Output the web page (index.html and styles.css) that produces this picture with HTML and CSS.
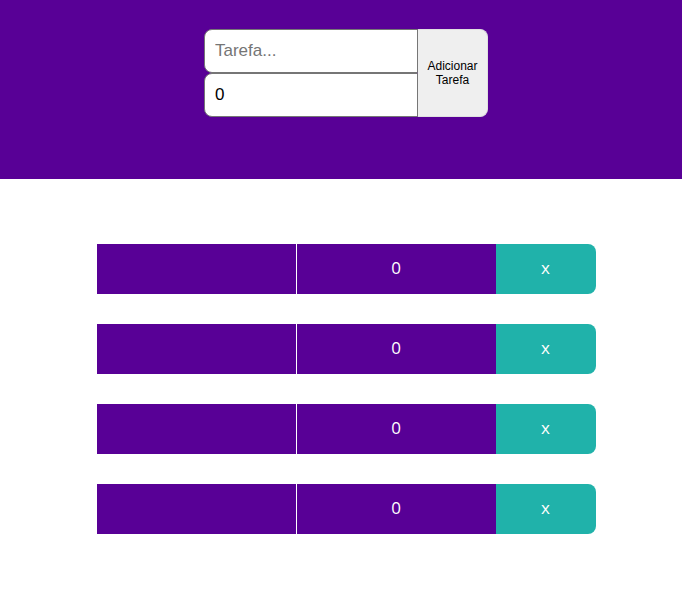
FILE: index.html
```html
<!DOCTYPE html>
<html lang="pt">
<head>
<meta charset="utf-8">
<title>Tarefas</title>
<link rel="stylesheet" href="styles.css">
</head>
<body>
<header class="header">
  <form class="form">
    <div class="fields">
      <input class="field field-top" type="text" placeholder="Tarefa...">
      <input class="field field-bottom" type="number" value="0">
    </div>
    <button class="add" type="button">Adicionar Tarefa</button>
  </form>
</header>
<main class="list">
  <div class="row"><div class="cell name"></div><div class="cell qty">0</div><button class="cell del">x</button></div>
  <div class="row"><div class="cell name"></div><div class="cell qty">0</div><button class="cell del">x</button></div>
  <div class="row"><div class="cell name"></div><div class="cell qty">0</div><button class="cell del">x</button></div>
  <div class="row"><div class="cell name"></div><div class="cell qty">0</div><button class="cell del">x</button></div>
</main>
</body>
</html>
```

FILE: styles.css
```css
* { box-sizing: border-box; }
html, body { margin: 0; padding: 0; background: #fff; }
body { font-family: "Liberation Sans", Arial, sans-serif; }

.header {
  background: #580096;
  height: 179px;
  display: flex;
  justify-content: center;
  align-items: flex-start;
  padding: 29px 0 0 10px;
}
.form { display: flex; margin: 0; }
.fields { display: flex; flex-direction: column; width: 214px; }
.field {
  width: 214px;
  height: 44px;
  margin: 0;
  border: 1px solid #767676;
  border-radius: 8px 0 0 8px;
  background: #fff;
  padding: 0 10px;
  font-family: "Liberation Sans", Arial, sans-serif;
  font-size: 17px;
  color: #000;
  outline: none;
  -moz-appearance: textfield;
}
.field::-webkit-outer-spin-button,
.field::-webkit-inner-spin-button { -webkit-appearance: none; margin: 0; }
.field::placeholder { color: #757575; }
.add {
  width: 70px;
  height: 88px;
  margin: 0;
  border: 1px solid #e0e0e0;
  border-left: none;
  border-radius: 0 8px 8px 0;
  background: #efefef;
  font-family: "Liberation Sans", Arial, sans-serif;
  font-size: 12px;
  color: #000;
  padding: 0 5px;
  line-height: 14px;
}

.list {
  display: flex;
  flex-direction: column;
  align-items: center;
  gap: 30px;
  padding: 65px 0 0 10px;
}
.row { display: flex; width: 499px; height: 50px; }
.cell {
  display: flex;
  align-items: center;
  justify-content: center;
  color: #fff;
  font-size: 17px;
  font-family: "Open Sans", "Liberation Sans", sans-serif;
}
.name { width: 200px; background: #580096; border-right: 1px solid #fff; }
.qty { width: 199px; background: #580096; padding-bottom: 3px; }
.del {
  width: 100px;
  background: #20b2aa;
  border: none;
  border-radius: 0 8px 8px 0;
  margin: 0;
  padding: 0 0 4px;
}
```
